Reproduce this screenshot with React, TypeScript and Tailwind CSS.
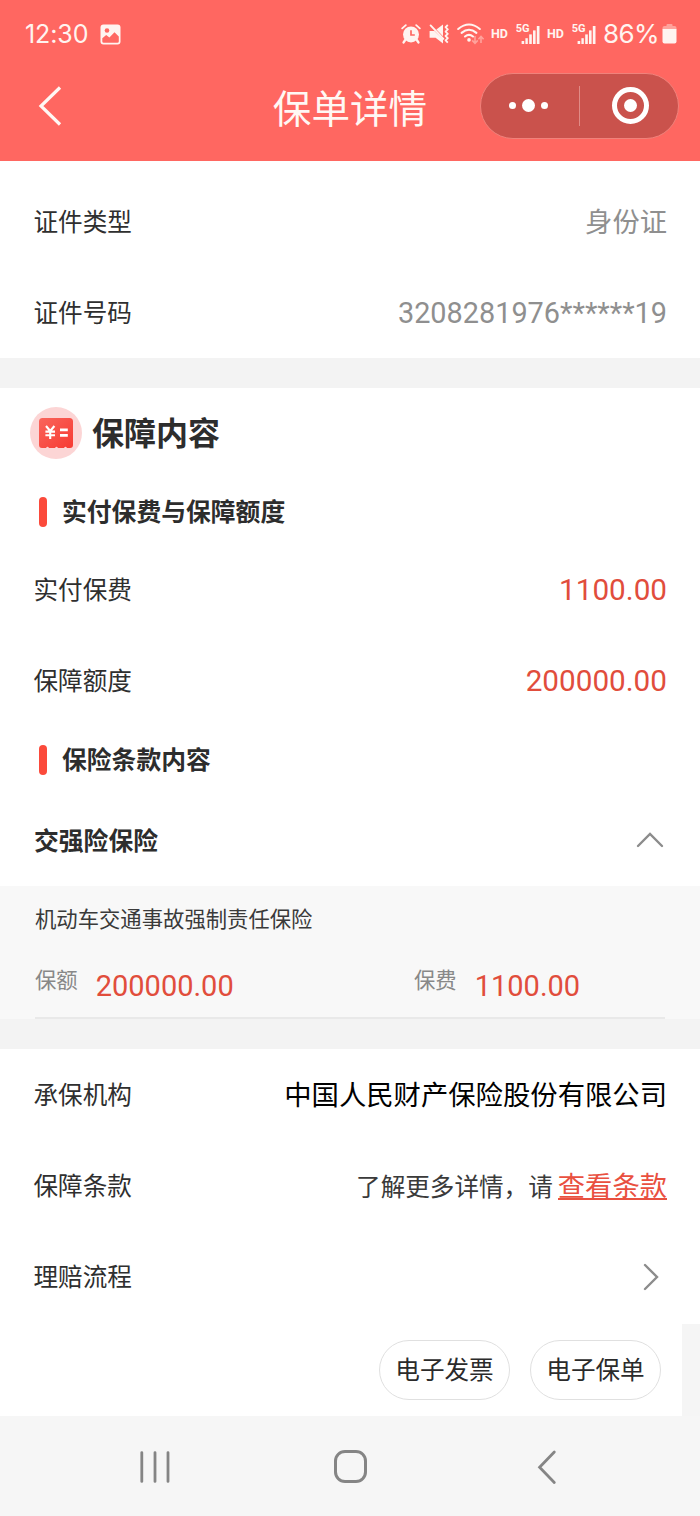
import React from 'react';

const PhotoIcon = () => (
  <svg width="21" height="21" viewBox="0 0 21 21" fill="none">
    <rect x="0.5" y="0.5" width="20" height="20" rx="3" fill="#fff4f0" />
    <circle cx="7" cy="6.5" r="2.3" fill="#ff6761" />
    <path d="M2.3 14.2 L6.2 11 L9.4 13.4 L14.5 8.2 L18.8 12.6 V17.4 Q18.8 18.8 17.4 18.8 H3.7 Q2.3 18.8 2.3 17.4 Z" fill="#ff6761" />
  </svg>
);

const AlarmIcon = () => (
  <svg width="20" height="20" viewBox="0 0 20 20" fill="none">
    <path d="M1.2 4.4 L4.8 1.2 M18.8 4.4 L15.2 1.2" stroke="#fff4f0" strokeWidth="1.8" strokeLinecap="round" />
    <path d="M4.2 16 L2.6 18.4 M15.8 16 L17.4 18.4" stroke="#fff4f0" strokeWidth="2.4" strokeLinecap="round" />
    <circle cx="10" cy="10.4" r="8" fill="#fff4f0" />
    <path d="M10 6.2 V11 H13.8" stroke="#ff6761" strokeWidth="1.7" />
  </svg>
);

const MuteIcon = () => (
  <svg width="20" height="20" viewBox="0 0 20 20" fill="none">
    <path d="M0.6 7 H5.4 L14 15.2 V19.4 L6.6 13.8 H0.6 Z" fill="#fff4f0" />
    <path d="M7.4 5.6 L14 0.6 V12.2 Z" fill="#fff4f0" />
    <path d="M1.6 1.4 L14.4 14.8" stroke="#fff4f0" strokeWidth="1.9" strokeLinecap="round" />
    <path d="M18.8 1 L16.6 3.2 L18.8 5.4 L16.6 7.6 L18.8 9.8 L16.6 12 L18.8 14.2 L16.6 16.4 L18.8 18.6" stroke="#fff4f0" strokeWidth="1.8" strokeLinejoin="round" />
  </svg>
);

const WifiIcon = () => (
  <svg width="28" height="22" viewBox="0 0 28 22" fill="none">
    <g stroke="#fff4f0" strokeWidth="2.1" strokeLinecap="round">
      <path d="M1.2 6 Q12 -3 22.8 6" />
      <path d="M4.6 9.9 Q12 3.6 19.4 9.9" />
      <path d="M8 13.5 Q12 10.2 16 13.5" />
    </g>
    <circle cx="12" cy="16.9" r="1.8" fill="#fff4f0" />
    <g stroke="#ffa39c" strokeWidth="1.6">
      <path d="M18 13 V20.4 M15.2 17.4 L18 20.4 L20.8 17.4" />
      <path d="M24 20 V13.4 M21.4 16.2 L24 13.4 L26.6 16.2" />
    </g>
  </svg>
);

const SignalIcon = () => (
  <svg width="24" height="24" viewBox="0 0 24 24">
    <text x="-0.3" y="10.2" fontFamily="Roboto, sans-serif" fontSize="11" fontWeight="700" fill="#fff4f0">5G</text>
    <g fill="#fff4f0">
      <rect x="5.6" y="19" width="2.6" height="3" />
      <rect x="9.4" y="16.2" width="2.4" height="5.8" />
      <rect x="13.2" y="12.4" width="2.6" height="9.6" />
      <rect x="17" y="8.4" width="2.6" height="13.6" />
      <rect x="20.8" y="4" width="2.7" height="18" />
    </g>
  </svg>
);

const BatteryIcon = () => (
  <svg width="15" height="20" viewBox="0 0 15 20">
    <rect x="4.5" y="0" width="6" height="4" rx="1" fill="#ffa39c" />
    <path d="M0.5 5.2 V4 Q0.5 2 2.5 2 H12.5 Q14.5 2 14.5 4 V5.2 Z" fill="#ffa39c" />
    <path d="M0.5 5 H14.5 V17.5 Q14.5 19.5 12.5 19.5 H2.5 Q0.5 19.5 0.5 17.5 Z" fill="#fff4f0" />
  </svg>
);

const PolicyIcon = () => (
  <svg width="52" height="52" viewBox="0 0 52 52" fill="none">
    <defs>
      <linearGradient id="card" x1="0" y1="0" x2="1" y2="1">
        <stop offset="0" stopColor="#f9655c" />
        <stop offset="1" stopColor="#f73a32" />
      </linearGradient>
    </defs>
    <circle cx="26" cy="26" r="26" fill="#fcd5d5" />
    <path d="M12.5 11 H39.5 Q43 11 43 14.5 V38 Q43 41 40 41 L37 41 Q35.5 38.5 34 41 H28 Q26.5 38.5 25 41 H19 Q17.5 38.5 16 41 H12 Q9 41 9 38 V14.5 Q9 11 12.5 11 Z" fill="url(#card)" />
    <path d="M16 19 L20.2 24 L24.4 19 M20.2 24 V32 M15.4 24.6 H25 M15.4 28.2 H25" stroke="#fff" strokeWidth="2.1" />
    <path d="M30 22.8 H37.8 M30 28.4 H37.8" stroke="#fff" strokeWidth="2.8" />
  </svg>
);

const Row = ({ label, children }: { label: string; children?: React.ReactNode }) => (
  <div className="flex h-[91px] items-center justify-between pl-[33.5px] pr-[33px]">
    <span className="pb-[2px] text-[24.6px] text-[#2f2f2f]">{label}</span>
    {children}
  </div>
);

const SubTitle = ({ children }: { children: string }) => (
  <div className="flex h-[67px] items-center pl-[39px]">
    <span className="h-[30px] w-2 rounded-full bg-[#fb4a3b]"></span>
    <span className="ml-[15px] pb-[3px] text-[24.8px] font-bold text-[#2d2d2d]">{children}</span>
  </div>
);

const PillButton = ({ children }: { children: string }) => (
  <button className="h-[60px] w-[131px] rounded-full border border-[#e0e0e0] bg-white pb-[3px] text-[24.6px] text-[#2b2b2b]">
    {children}
  </button>
);

const App: React.FC = () => {
  return (
    <div className="flex h-[1516px] w-[700px] flex-col overflow-hidden whitespace-nowrap bg-white font-['Noto_Sans_CJK_SC',sans-serif] leading-none">
      {/* Header */}
      <header className="h-[161px] shrink-0 bg-[#ff6761] text-[#fff4f0]">
        <div className="flex h-[68px] items-center pl-[25px] font-[Roboto,sans-serif]">
          <span className="font-[Inter,sans-serif] text-[25px] tracking-[-0.1px]">12:30</span>
          <span className="ml-3"><PhotoIcon /></span>
          <div className="ml-auto flex items-center pr-[23px]">
            <AlarmIcon />
            <span className="ml-2"><MuteIcon /></span>
            <span className="ml-2"><WifiIcon /></span>
            <span className="ml-[6px] w-[17px] text-[12.5px] font-bold">HD</span>
            <span className="ml-2"><SignalIcon /></span>
            <span className="ml-[7px] w-[17px] text-[12.5px] font-bold">HD</span>
            <span className="ml-2"><SignalIcon /></span>
            <span className="ml-[7px] font-[Inter,sans-serif] text-[26px] tracking-[-0.6px]">86%</span>
            <span className="ml-[3px]"><BatteryIcon /></span>
          </div>
        </div>
        <div className="grid h-[75px] grid-cols-[1fr_auto_1fr] items-center px-[21px]">
          <svg className="ml-[17px]" width="24" height="40" viewBox="0 0 24 40" fill="none">
            <path d="M22 1.5 L3 20 L22 38.5" stroke="#fff8f4" strokeWidth="3.2" />
          </svg>
          <h1 className="pt-px text-[38.6px] text-[#fff8f4]">保单详情</h1>
          <div className="flex h-[66px] w-[199px] items-center justify-self-end rounded-full border border-[#f0827b] bg-[#ca524c]">
            <div className="flex flex-1 items-center justify-center gap-[6px] pr-[2px]">
              <span className="size-[7px] rounded-full bg-white"></span>
              <span className="size-[13px] rounded-full bg-white"></span>
              <span className="size-[7px] rounded-full bg-white"></span>
            </div>
            <span className="h-10 w-px bg-[#e08b86]"></span>
            <div className="flex flex-1 items-center justify-center pl-[3px]">
              <span className="flex size-[37px] items-center justify-center rounded-full border-[5px] border-white">
                <span className="size-[13px] rounded-full bg-white"></span>
              </span>
            </div>
          </div>
        </div>
      </header>

      {/* ID document */}
      <section className="h-[197px] shrink-0 pt-[15px]">
        <Row label="证件类型">
          <span className="pb-[2px] text-[27.3px] text-[#8f8f8f]">身份证</span>
        </Row>
        <Row label="证件号码">
          <span className="pt-[2px] font-[Roboto,sans-serif] text-[28.85px] text-[#8f8f8f]">3208281976******19</span>
        </Row>
      </section>
      <div className="h-[30px] shrink-0 bg-[#f3f3f3]"></div>

      {/* Coverage */}
      <section className="shrink-0">
        <div className="flex h-[90px] items-center pl-[30px]">
          <PolicyIcon />
          <h2 className="ml-[10px] pb-[5px] text-[32px] font-bold text-[#2d2d2d]">保障内容</h2>
        </div>
        <SubTitle>实付保费与保障额度</SubTitle>
        <div className="-mt-px">
          <Row label="实付保费">
            <span className="font-[Roboto,sans-serif] text-[29.7px] text-[#e14d3c]">1100.00</span>
          </Row>
          <Row label="保障额度">
            <span className="font-[Roboto,sans-serif] text-[29.7px] text-[#e14d3c]">200000.00</span>
          </Row>
        </div>
        <SubTitle>保险条款内容</SubTitle>
        <div className="flex h-[93px] items-center justify-between pl-[34px] pr-[36px]">
          <span className="pb-px text-[24.8px] font-bold text-[#2d2d2d]">交强险保险</span>
          <svg width="28" height="16" viewBox="0 0 28 16" fill="none">
            <path d="M2 14 L14 2 L26 14" stroke="#8c8c8c" strokeWidth="2.4" strokeLinecap="round" />
          </svg>
        </div>
        <div className="h-[133px] bg-[#f8f8f8] px-[35px] pt-[21px]">
          <div className="flex h-[112px] flex-col border-b-2 border-[#e9e9e9]">
            <p className="text-[21.35px] text-[#3a3a3a]">机动车交通事故强制责任保险</p>
            <div className="mt-10 grid grid-cols-[379px_1fr]">
              <div className="flex">
                <span className="text-[21.35px] text-[#888888]">保额</span>
                <span className="ml-[18px] mt-1 font-[Roboto,sans-serif] text-[29px] text-[#e14d3c]">200000.00</span>
              </div>
              <div className="flex">
                <span className="text-[21.35px] text-[#888888]">保费</span>
                <span className="ml-[18px] mt-1 font-[Roboto,sans-serif] text-[29px] text-[#e14d3c]">1100.00</span>
              </div>
            </div>
          </div>
        </div>
      </section>
      <div className="h-[30px] shrink-0 bg-[#f3f3f3]"></div>

      {/* Insurer and terms */}
      <section className="shrink-0">
        <Row label="承保机构">
          <span className="pb-[2px] text-[27.35px] text-black">中国人民财产保险股份有限公司</span>
        </Row>
        <Row label="保障条款">
          <span className="flex items-center text-[24.6px] text-[#3a3a3a]">
            了解更多详情，请
            <a className="ml-[5px] border-b-2 border-[#e9503f] text-[27.3px] text-[#e9503f]">查看条款</a>
          </span>
        </Row>
        <Row label="理赔流程">
          <svg className="mr-2" width="16" height="28" viewBox="0 0 16 28" fill="none">
            <path d="M2 2 L14 14 L2 26" stroke="#8c8c8c" strokeWidth="2.4" strokeLinecap="round" />
          </svg>
        </Row>
      </section>
      <div className="flex flex-1 border-t-2 border-white bg-[#f5f5f5]">
        <div className="flex w-[682px] items-start justify-end gap-5 bg-white pr-[21px] pt-4">
          <PillButton>电子发票</PillButton>
          <PillButton>电子保单</PillButton>
        </div>
      </div>

      {/* System navigation */}
      <nav className="flex h-[100px] shrink-0 items-center bg-[#f6f6f6] pl-[139px] pt-px">
        <svg width="32" height="36" viewBox="0 0 32 36" fill="none">
          <path d="M2.8 3.6 V32.4 M16 3.6 V32.4 M29 3.6 V32.4" stroke="#858585" strokeWidth="2.8" strokeLinecap="round" />
        </svg>
        <span className="ml-[163px] h-[33px] w-[33px] rounded-[11px] border-[3px] border-[#858585]"></span>
        <svg className="ml-[170px]" width="20" height="36" viewBox="0 0 20 36" fill="none">
          <path d="M17.3 3 L2.6 18.3 L17.3 33.4" stroke="#858585" strokeWidth="2.8" strokeLinecap="round" />
        </svg>
      </nav>
    </div>
  );
};

export default App;
